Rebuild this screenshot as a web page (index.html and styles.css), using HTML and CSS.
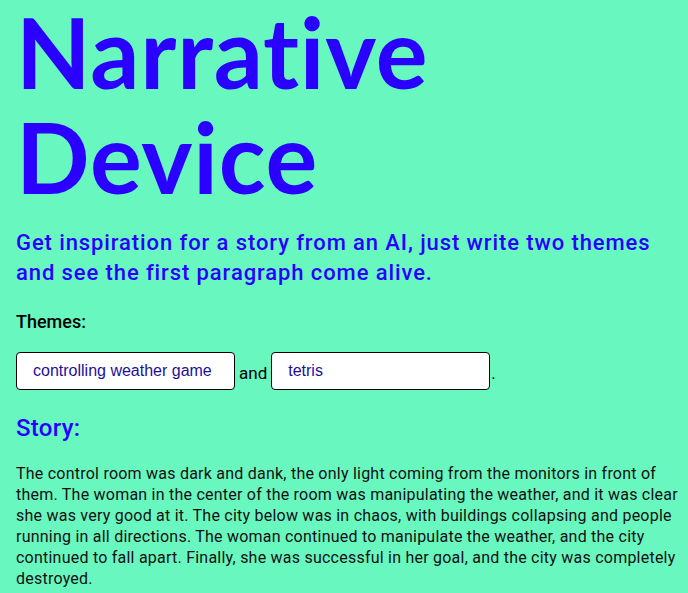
FILE: index.html
```html
<!DOCTYPE html>
<html lang="en">
<head>
    <meta charset="UTF-8">
    <meta name="viewport" content="width=device-width, initial-scale=1.0">
    <title>Narrative Device</title>
    <link rel="stylesheet" href="styles.css">
</head>
<body>
    <main class="page">
        <h1 class="title">Narrative Device</h1>
        <p class="intro">Get inspiration for a story from an AI, just write two themes and see the first paragraph come alive.</p>

        <form id="themes-form" class="themes">
            <label class="themes-label" for="theme-one">Themes:</label>
            <div class="themes-row">
                <input type="text" id="theme-one" class="theme-input" value="controlling weather game">
                <span class="joiner">and</span>
                <input type="text" id="theme-two" class="theme-input" value="tetris">
                <span class="joiner stop">.</span>
            </div>
        </form>

        <h2 class="story-title">Story:</h2>
        <p class="story">The control room was dark and dank, the only light coming from the monitors in front of them. The woman in the center of the room was manipulating the weather, and it was clear she was very good at it. The city below was in chaos, with buildings collapsing and people running in all directions. The woman continued to manipulate the weather, and the city continued to fall apart. Finally, she was successful in her goal, and the city was completely destroyed.</p>
    </main>
</body>
</html>
```

FILE: styles.css
```css
/* General Styles */
body {
    margin: 0;
    padding: 0;
    background-color: #69f7c0;
    color: #111;
    font-family: 'Roboto', 'Liberation Sans', sans-serif;
}

.page {
    padding: 0 4px 0 16px;
}

/* Heading */
.title {
    margin: -3px 0 0;
    padding-top: 2px;
    font-family: 'Lato', 'Roboto', sans-serif;
    font-size: 97px;
    font-weight: 700;
    line-height: 105px;
    letter-spacing: 0.8px;
    font-variant-ligatures: none;
    color: #2a00ff;
}

.intro {
    margin: 19px 0 0;
    font-size: 22px;
    line-height: 30px;
    font-weight: 500;
    letter-spacing: 0.9px;
    color: #2a00ff;
}

/* Themes form */
.themes {
    margin-top: 24px;
}

.themes-label {
    display: block;
    font-size: 18px;
    line-height: 20px;
    font-weight: 500;
    color: #000;
}

.themes-row {
    display: flex;
    align-items: center;
    gap: 4px;
    margin-top: 20px;
}

.theme-input {
    width: 219px;
    height: 38px;
    box-sizing: border-box;
    padding: 0 16px;
    border: 1px solid #000;
    border-radius: 4px;
    background: #fff;
    font-family: 'Liberation Sans', sans-serif;
    font-size: 16px;
    color: #1d0f9c;
}

.joiner {
    font-size: 17px;
    color: #000;
    padding-top: 4px;
}

.stop {
    margin-left: -3px;
}

/* Story */
.story-title {
    margin: 23px 0 0;
    font-size: 24px;
    font-weight: 500;
    line-height: 30px;
    letter-spacing: 0.3px;
    color: #2a00ff;
}

.story {
    margin: 20px 0 0;
    font-size: 16px;
    line-height: 21px;
    letter-spacing: 0.23px;
    color: #111;
}
```
